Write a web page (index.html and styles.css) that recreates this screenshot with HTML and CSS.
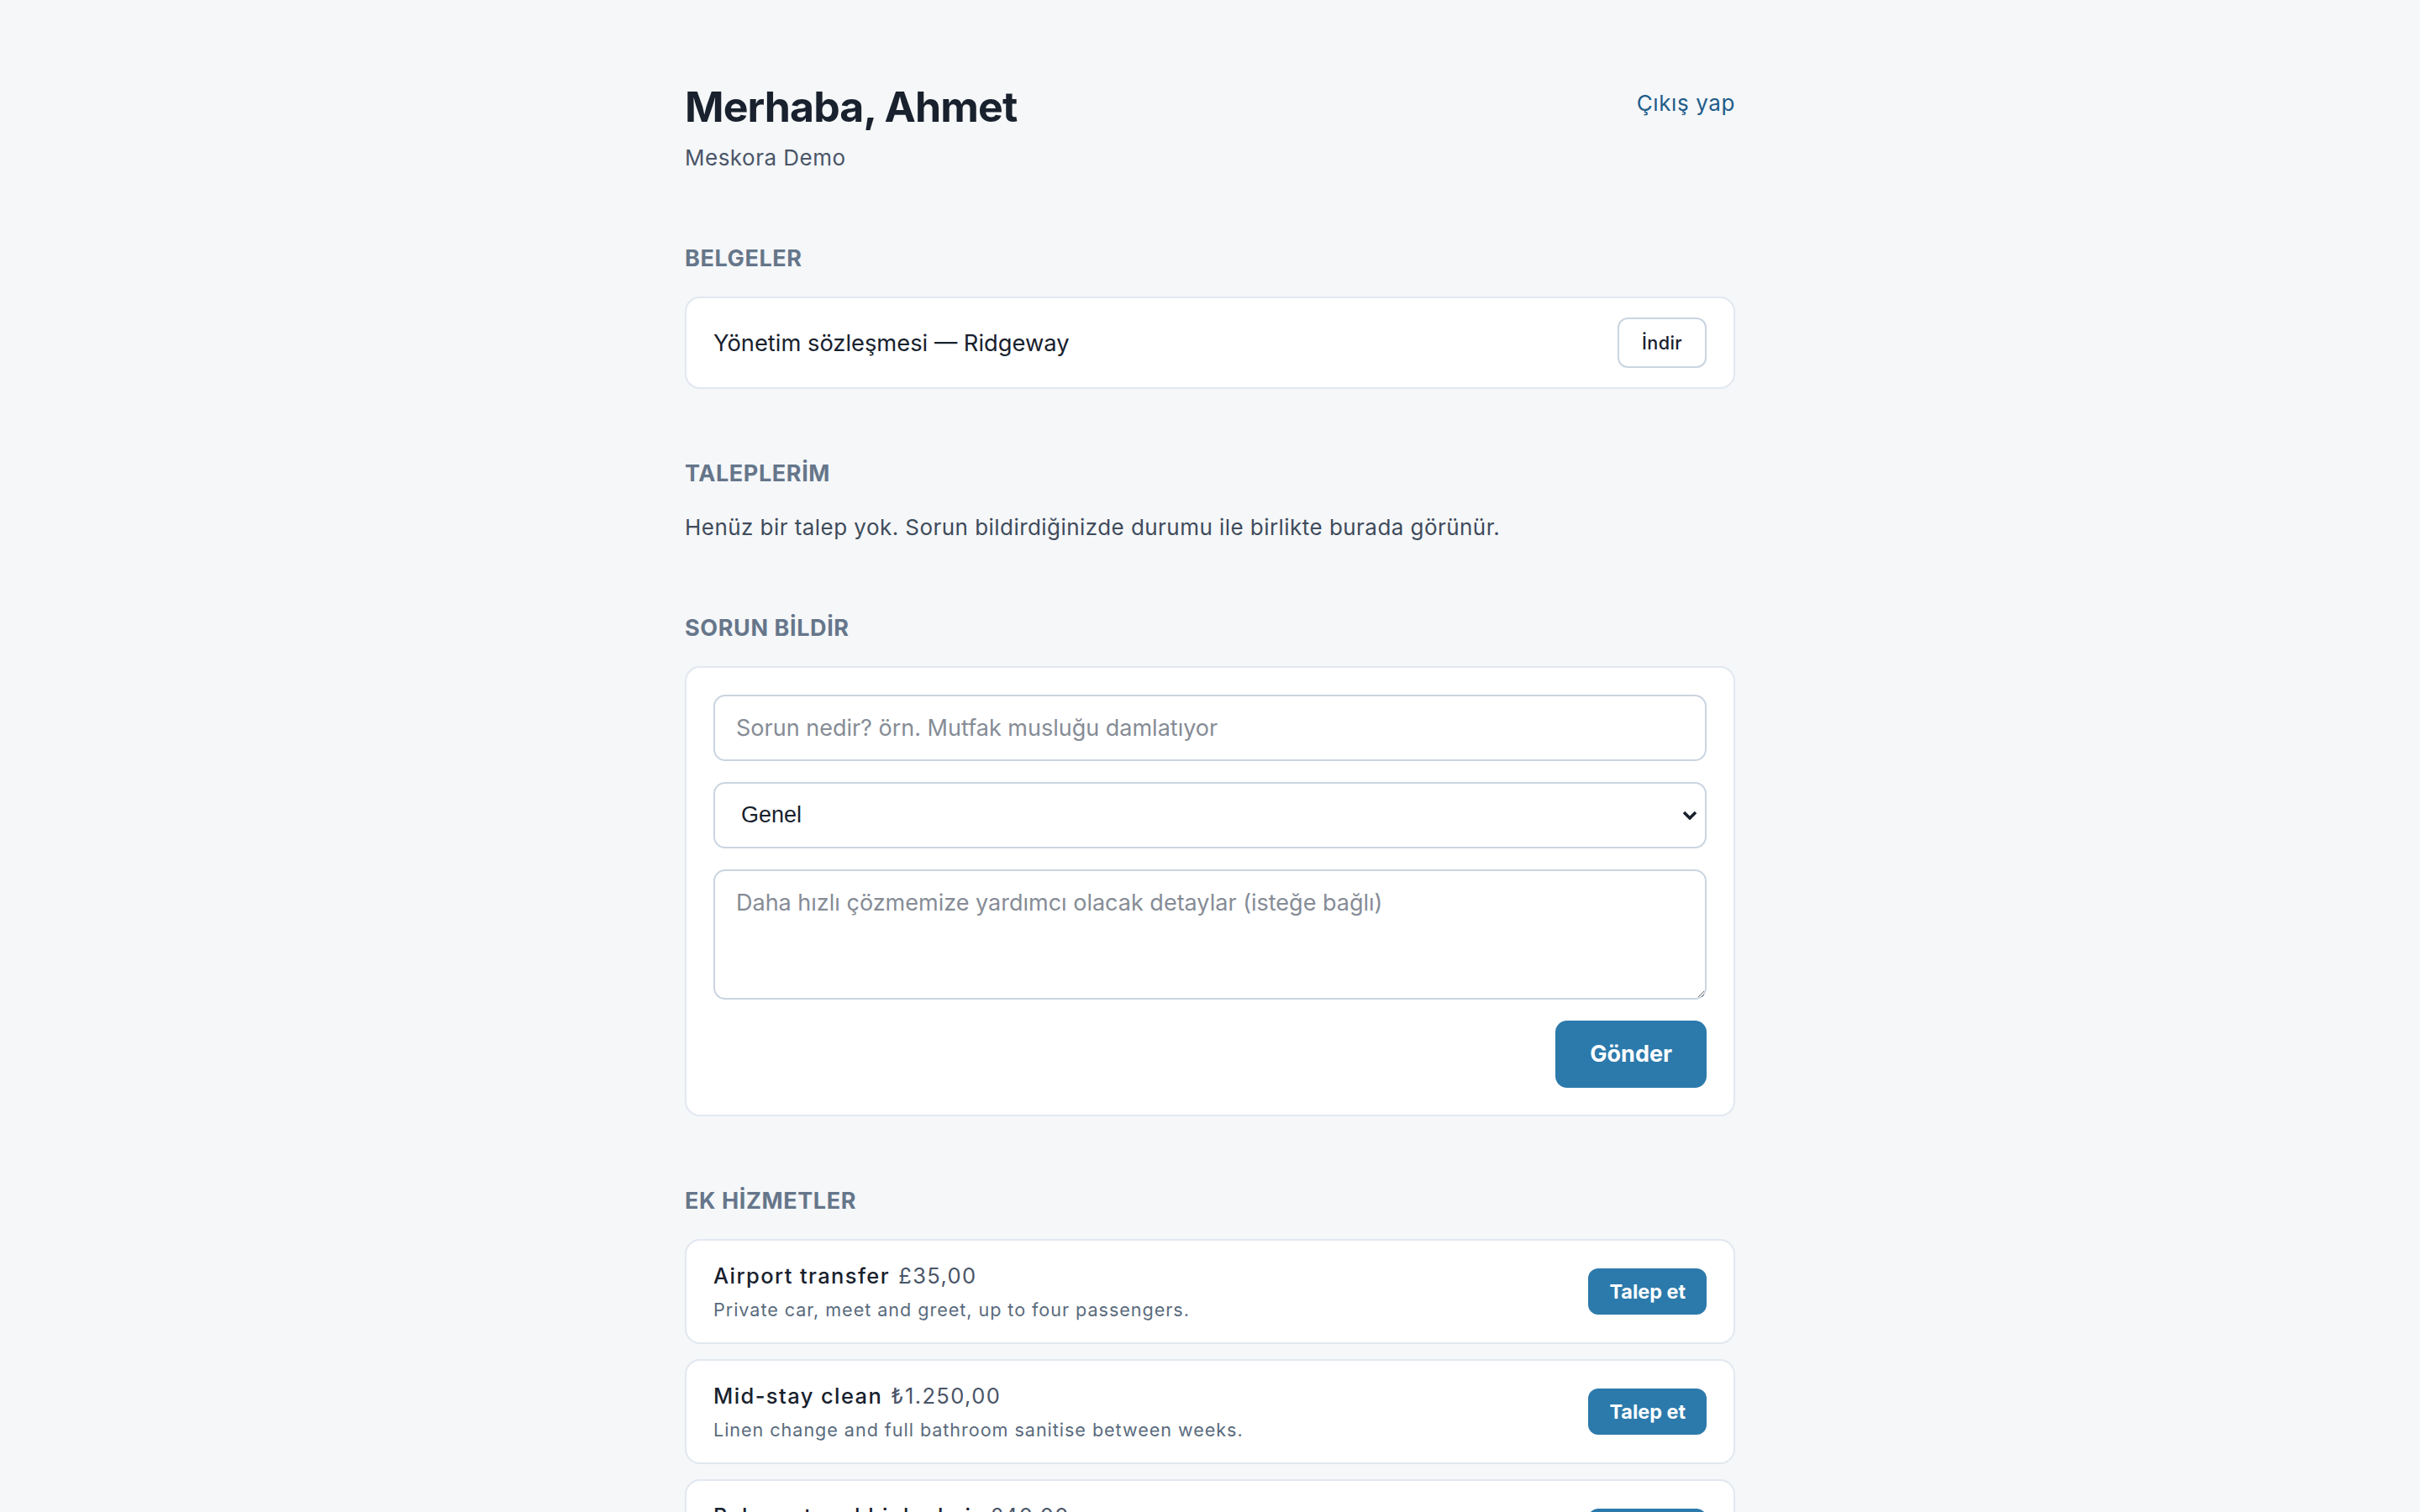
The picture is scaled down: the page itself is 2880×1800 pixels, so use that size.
FILE: index.html
```html
<!DOCTYPE html>
<html lang="tr">
<head>
<meta charset="UTF-8">
<meta name="viewport" content="width=device-width, initial-scale=1.0">
<title>Meskora - Misafir paneli</title>
<link rel="stylesheet" href="styles.css">
</head>
<body>
<main class="portal">
    <header class="portal-head">
        <div>
            <h1>Merhaba, Ahmet</h1>
            <p class="sub">Meskora Demo</p>
        </div>
        <a href="#" class="logout">Çıkış yap</a>
    </header>

    <section class="block">
        <h2>BELGELER</h2>
        <div class="card row">
            <span class="doc-name">Yönetim sözleşmesi — Ridgeway</span>
            <button class="btn-ghost">İndir</button>
        </div>
    </section>

    <section class="block">
        <h2>TALEPLERİM</h2>
        <p class="empty">Henüz bir talep yok. Sorun bildirdiğinizde durumu ile birlikte burada görünür.</p>
    </section>

    <section class="block">
        <h2>SORUN BİLDİR</h2>
        <form class="card form" onsubmit="return false">
            <input class="field" type="text" placeholder="Sorun nedir? örn. Mutfak musluğu damlatıyor">
            <select class="field field-select">
                <option>Genel</option>
                <option>Tesisat</option>
                <option>Elektrik</option>
                <option>Temizlik</option>
            </select>
            <textarea class="field field-area" placeholder="Daha hızlı çözmemize yardımcı olacak detaylar (isteğe bağlı)"></textarea>
            <button class="btn btn-send">Gönder</button>
        </form>
    </section>

    <section class="block">
        <h2>EK HİZMETLER</h2>
        <div class="services">
            <div class="card row">
                <div>
                    <div class="service-title">Airport transfer <span class="price">£35,00</span></div>
                    <div class="service-desc">Private car, meet and greet, up to four passengers.</div>
                </div>
                <button class="btn btn-small">Talep et</button>
            </div>
            <div class="card row">
                <div>
                    <div class="service-title">Mid-stay clean <span class="price">₺1.250,00</span></div>
                    <div class="service-desc">Linen change and full bathroom sanitise between weeks.</div>
                </div>
                <button class="btn btn-small">Talep et</button>
            </div>
            <div class="card row">
                <div>
                    <div class="service-title">Baby cot and high chair <span class="price">£40,00</span></div>
                    <div class="service-desc">Set up in the bedroom before your arrival.</div>
                </div>
                <button class="btn btn-small">Talep et</button>
            </div>
        </div>
    </section>
</main>
</body>
</html>
```

FILE: styles.css
```css
* {
    box-sizing: border-box;
}
body {
    margin: 0;
    background: #f5f7f9;
    color: #18212d;
    font-family: Inter, "DejaVu Sans", sans-serif;
}

.portal {
    width: 1250px;
    margin: 0 auto;
    padding: 97px 0 80px;
}

/* header */
.portal-head {
    display: flex;
    justify-content: space-between;
    align-items: flex-start;
    margin-bottom: 84px;
}
.portal-head h1 {
    margin: 0;
    font-size: 50px;
    line-height: 60px;
    font-weight: 700;
    letter-spacing: -0.9px;
}
.sub {
    margin: 13px 0 0;
    font-size: 26px;
    line-height: 36px;
    letter-spacing: 0.5px;
    color: #4a5568;
}
.logout {
    margin-top: 8px;
    font-size: 26px;
    line-height: 36px;
    letter-spacing: 0.6px;
    color: #1f5c8a;
    text-decoration: none;
}

/* sections */
.block + .block {
    margin-top: 83px;
}
.block h2 {
    margin: 0 0 27px;
    font-size: 27px;
    line-height: 36px;
    font-weight: 700;
    letter-spacing: 0.6px;
    color: #66768a;
}
.card {
    background: #fff;
    border: 2px solid #e2e8f0;
    border-radius: 18px;
}
.row {
    display: flex;
    align-items: center;
    justify-content: space-between;
    gap: 24px;
    padding: 23px 32px;
}
.doc-name {
    font-size: 27.3px;
}
.empty {
    margin: 0;
    font-size: 26px;
    line-height: 1.45;
    letter-spacing: 0.45px;
    color: #3f4b5b;
}

/* form */
.form {
    display: flex;
    flex-direction: column;
    gap: 25px;
    padding: 32px;
}
.field {
    height: 79px;
    padding: 0 22px 0 25px;
    border: 2px solid #cbd5e1;
    border-radius: 14px;
    background: #fff;
    font-family: inherit;
    font-size: 27px;
    color: #18212d;
}
.field::placeholder {
    color: #868c96;
}
.field-select {
    appearance: none;
    padding-left: 31px;
    font-family: "Liberation Sans", Arial, sans-serif;
    background: #fff url("data:image/svg+xml,%3Csvg xmlns='http://www.w3.org/2000/svg' viewBox='0 0 18 11'%3E%3Cpath d='M2 2l7 7 7-7' fill='none' stroke='%2318212d' stroke-width='3.6'/%3E%3C/svg%3E") no-repeat right 9px center / 18px 11px;
}
.field-area {
    height: 155px;
    padding: 20px 22px 20px 25px;
    line-height: 1.3;
    resize: vertical;
}

/* buttons */
.btn {
    border: 0;
    background: #2c7aab;
    color: #fff;
    font-family: inherit;
    font-weight: 700;
    cursor: pointer;
}
.btn-send {
    align-self: flex-end;
    height: 80px;
    padding: 0 41px;
    border-radius: 14px;
    font-size: 27px;
}
.btn-small {
    height: 55px;
    padding: 0 25px;
    border-radius: 12px;
    font-size: 23.4px;
}
.btn-ghost {
    height: 60px;
    padding: 0 27px;
    border: 2px solid #cbd5e1;
    border-radius: 12px;
    background: #fff;
    color: #18212d;
    font-family: inherit;
    font-size: 21.6px;
    font-weight: 500;
    letter-spacing: 0.4px;
}

/* services */
.services {
    display: flex;
    flex-direction: column;
    gap: 18px;
}
.service-title {
    font-size: 25.5px;
    line-height: 38px;
    font-weight: 500;
    letter-spacing: 1.4px;
}
.price {
    margin-left: 2px;
    font-weight: 400;
    color: #4a5568;
}
.service-desc {
    margin-top: 5px;
    font-size: 21.6px;
    line-height: 32px;
    letter-spacing: 0.95px;
    color: #5a6b7d;
}
```
